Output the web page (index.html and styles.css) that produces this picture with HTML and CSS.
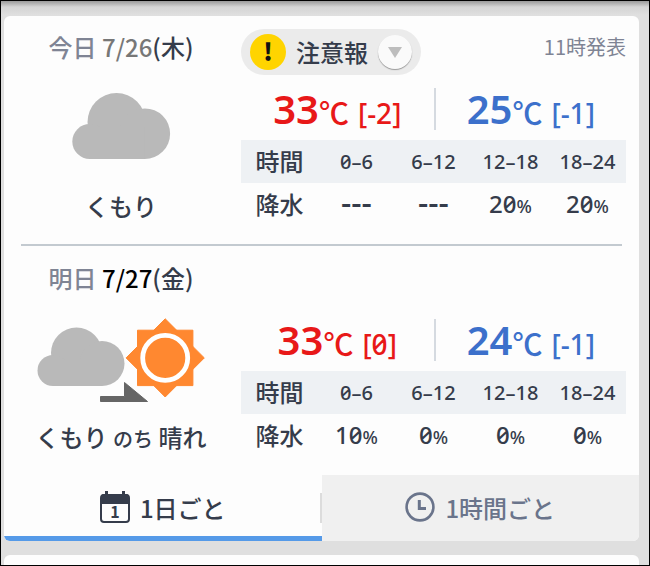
FILE: index.html
```html
<!DOCTYPE html>
<html lang="ja">
<head>
    <meta charset="UTF-8">
    <meta name="viewport" content="width=device-width, initial-scale=1">
    <title>天気予報</title>
    <link rel="stylesheet" href="styles.css">
</head>
<body>
    <main class="screen">
        <div class="card">
            <!-- Today -->
            <section class="day">
                <div class="summary">
                    <h2 class="date"><span class="date-label">今日</span> <span class="date-past">7/26</span>(木)</h2>
                    <svg class="weather-icon" viewBox="0 0 200 84" aria-hidden="true">
                        <g fill="#b9b9b9">
                            <circle cx="95.5" cy="35" r="29"/>
                            <circle cx="123.8" cy="46.7" r="25.3"/>
                            <circle cx="68.8" cy="54.5" r="17.5"/>
                            <rect x="68.8" y="40" width="55" height="32"/>
                        </g>
                    </svg>
                    <p class="weather-name">くもり</p>
                </div>
                <div class="detail">
                    <div class="detail-head">
                        <button class="alert" type="button">
                            <span class="alert-mark">!</span>
                            <span class="alert-text">注意報</span>
                            <span class="alert-arrow">
                                <svg width="14" height="11" viewBox="0 0 14 11" aria-hidden="true"><path d="M0 0H14L7 11Z" fill="#bdbdbd"/></svg>
                            </span>
                        </button>
                        <span class="issued">11時発表</span>
                    </div>
                    <div class="temps">
                        <div class="temp high">33<span class="unit">℃</span><span class="diff">[-2]</span></div>
                        <div class="temp low">25<span class="unit">℃</span><span class="diff">[-1]</span></div>
                    </div>
                    <table class="rain">
                        <thead>
                            <tr><th scope="row">時間</th><td>0–6</td><td>6–12</td><td>12–18</td><td>18–24</td></tr>
                        </thead>
                        <tbody>
                            <tr><th scope="row">降水</th><td><span class="none">---</span></td><td><span class="none">---</span></td><td>20<small>%</small></td><td>20<small>%</small></td></tr>
                        </tbody>
                    </table>
                </div>
            </section>

            <hr class="divider">

            <!-- Tomorrow -->
            <section class="day">
                <div class="summary">
                    <h2 class="date"><span class="date-label">明日</span> <span class="date-next">7/27</span>(金)</h2>
                    <svg class="weather-icon" viewBox="0 0 200 84" aria-hidden="true">
                        <g fill="#b9b9b9">
                            <circle cx="55.5" cy="35" r="25.5"/>
                            <circle cx="81" cy="45.5" r="22.5"/>
                            <circle cx="32" cy="52.5" r="15.5"/>
                            <rect x="32" y="42" width="49" height="26"/>
                        </g>
                        <g fill="#ff8830" stroke="#ff8830" stroke-linejoin="round">
                            <rect x="116.5" y="12.2" width="55.4" height="55.4"/>
                            <path d="M144.2 .8L183.3 39.9L144.2 79L105.1 39.9Z"/>
                        </g>
                        <circle cx="144.2" cy="39.9" r="22.5" fill="none" stroke="#fff" stroke-width="4.8"/>
                        <path d="M79.5 78.5H103.5V64.5L126.5 83.5H79.5Z" fill="#666" stroke="#666" stroke-linejoin="round"/>
                    </svg>
                    <p class="weather-name">くもり <small>のち</small> 晴れ</p>
                </div>
                <div class="detail">
                    <div class="detail-head"></div>
                    <div class="temps">
                        <div class="temp high">33<span class="unit">℃</span><span class="diff">[0]</span></div>
                        <div class="temp low">24<span class="unit">℃</span><span class="diff">[-1]</span></div>
                    </div>
                    <table class="rain">
                        <thead>
                            <tr><th scope="row">時間</th><td>0–6</td><td>6–12</td><td>12–18</td><td>18–24</td></tr>
                        </thead>
                        <tbody>
                            <tr><th scope="row">降水</th><td>10<small>%</small></td><td>0<small>%</small></td><td>0<small>%</small></td><td>0<small>%</small></td></tr>
                        </tbody>
                    </table>
                </div>
            </section>

            <!-- Daily / hourly switch -->
            <div class="tabs">
                <button class="tab active" type="button">
                    <svg width="30" height="32" viewBox="0 0 30 32" aria-hidden="true">
                        <rect x="1" y="4" width="28" height="27" rx="3" fill="none" stroke="#353c4b" stroke-width="2"/>
                        <path d="M1 13V6Q1 3 4 3H5V0H8V3H22V0H25V3H26Q29 3 29 6V13Z" fill="#353c4b"/>
                        <text class="calendar-day" x="15" y="27" text-anchor="middle">1</text>
                    </svg>
                    1日ごと
                </button>
                <button class="tab" type="button">
                    <svg width="30" height="30" viewBox="0 0 30 30" fill="none" stroke="#6a748b" aria-hidden="true">
                        <circle cx="15" cy="15" r="13.4" stroke-width="2.6"/>
                        <path d="M14.3 8V16.4H21" stroke-width="3"/>
                    </svg>
                    1時間ごと
                </button>
            </div>
        </div>
        <div class="card next-card"></div>
    </main>
</body>
</html>
```

FILE: styles.css
```css
* {
    box-sizing: border-box;
}

body {
    margin: 0;
    font-family: "Noto Sans CJK JP", "Noto Sans", sans-serif;
    font-size: 24px;
    font-weight: 500;
    color: #353c4b;
    background-color: #dfdfdf;
}

.screen {
    display: flex;
    flex-direction: column;
    gap: 14px;
    height: 100vh;
    overflow: hidden;
    padding: 15px 10px 0 3px;
    border: 1px solid #000;
    background: linear-gradient(#9a9a9a, #d4d4d4 6px, #dfdfdf 14px);
}

.card {
    flex-shrink: 0;
    overflow: hidden;
    border-radius: 6px;
    background-color: #fdfdfd;
}

.next-card {
    height: 60px;
}

/* One day of forecast */
.day {
    display: grid;
    grid-template-columns: 200px 1fr;
    gap: 20px;
    padding: 13px 13px 18px 17px;
}

.divider {
    height: 2px;
    margin: 0 17px 1px;
    border: none;
    background-color: #c3cad0;
}

.summary {
    text-align: center;
}

.date {
    margin: 0 0 22px;
    font-size: 24px;
    font-weight: 500;
    line-height: 36px;
}

.date-label {
    color: #7f8494;
}

.date-past {
    color: #777;
}

.date-next {
    color: #000;
}

.weather-icon {
    display: block;
    width: 100%;
    height: 84px;
}

.weather-name {
    margin: 17px 0 0;
    line-height: 36px;
}

.weather-name small {
    font-size: 20px;
}

.detail-head {
    display: flex;
    justify-content: space-between;
    align-items: flex-start;
    height: 46px;
}

.alert {
    display: flex;
    align-items: center;
    gap: 10px;
    height: 46px;
    padding: 0 9px;
    border: none;
    border-radius: 23px;
    background-color: #ebebeb;
    color: inherit;
    font: inherit;
    cursor: pointer;
}

.alert-mark {
    width: 36px;
    height: 36px;
    border-radius: 50%;
    background-color: #ffd400;
    color: #111;
    font-weight: 900;
    line-height: 34px;
    text-align: center;
}

.alert-text {
    padding-bottom: 2px;
}

.alert-arrow {
    display: flex;
    align-items: center;
    justify-content: center;
    width: 34px;
    height: 34px;
    border-radius: 50%;
    background-color: #fafafa;
    box-shadow: 0 1px 1px #999;
}

.issued {
    color: #7f8494;
    font-size: 20px;
    font-weight: 400;
    line-height: 36px;
}

/* Temperatures */
.temps {
    display: grid;
    grid-template-columns: 1fr 1fr;
    padding: 13px 0 10px;
}

.temp {
    height: 42px;
    font-family: "Noto Sans", "Noto Sans CJK JP", sans-serif;
    font-size: 40px;
    font-weight: 600;
    line-height: 42px;
    text-align: center;
    white-space: nowrap;
}

.high {
    color: #e81818;
}

.low {
    color: #3c70cb;
    border-left: 2px solid #d5dae0;
}

.unit {
    font-family: "Noto Sans CJK JP", sans-serif;
    font-size: 30px;
    font-weight: 500;
}

.diff {
    margin-left: 9px;
    font-size: 28px;
    font-weight: 500;
    font-variant-numeric: slashed-zero;
}

/* Chance of rain */
.rain {
    width: 100%;
    table-layout: fixed;
    border-collapse: collapse;
    font-family: "Noto Sans", "Noto Sans CJK JP", sans-serif;
    font-variant-numeric: slashed-zero;
    text-align: center;
}

.rain tr {
    height: 43px;
}

.rain th,
.rain td {
    padding: 0;
    line-height: 36px;
    font-weight: 500;
    white-space: nowrap;
}

.rain thead {
    background-color: #eef1f4;
}

.rain thead td {
    font-size: 20px;
}

.rain small {
    font-size: 18px;
}

.none {
    font-size: 32px;
    line-height: 24px;
}

/* Tabs */
.tabs {
    display: grid;
    grid-template-columns: 1fr 1fr;
}

.tab {
    position: relative;
    display: flex;
    align-items: center;
    justify-content: center;
    gap: 10px;
    height: 66px;
    padding: 0 0 2px;
    border: none;
    background-color: #f0f0f0;
    color: #6a748b;
    font: inherit;
    cursor: pointer;
}

.tab.active {
    background-color: #fdfdfd;
    box-shadow: inset 0 -5px #559ae8;
    color: #353c4b;
}

.tab.active::after {
    content: "";
    position: absolute;
    top: 18px;
    right: 0;
    width: 2px;
    height: 30px;
    background-color: #dcdcdc;
}

.calendar-day {
    fill: #353c4b;
    font-size: 16px;
    font-weight: 700;
}
```
